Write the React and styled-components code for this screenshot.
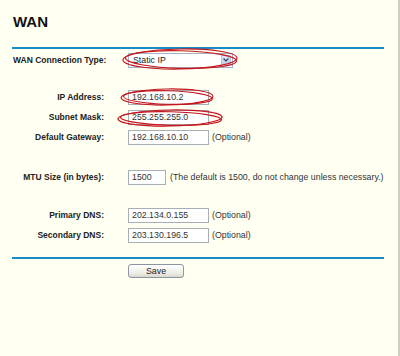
import React from "react";
import styled, { createGlobalStyle } from "styled-components";

const GlobalStyle = createGlobalStyle`
  html, body {
    margin: 0;
    padding: 0;
    background: #fffff2;
  }
  * {
    box-sizing: border-box;
  }
`;

const Page = styled.div`
  position: relative;
  width: 400px;
  height: 356px;
  background: #fffff2;
  border-right: 2px solid #cfcfc2;
  padding: 13px 0 0 12px;
  font-family: "Liberation Sans", Arial, sans-serif;
  font-size: 8.8px;
  color: #1e1e1e;
  overflow: hidden;
`;

const Title = styled.h1`
  margin: 0 0 16px 1px;
  font-size: 15px;
  line-height: 18px;
  font-weight: bold;
  color: #111;
`;

const Rule = styled.div`
  width: 372px;
  height: 2px;
  background: #1b8ac9;
`;

const Form = styled.div`
  display: flex;
  flex-direction: column;
  padding-top: 1px;
  padding-bottom: 12px;
`;

const Row = styled.div`
  display: flex;
  align-items: center;
  height: 20px;
  margin-top: ${(props) => props.space || 0}px;
`;

const Label = styled.div`
  width: 92px;
  margin-right: 24px;
  font-size: 8.5px;
  font-weight: bold;
  text-align: ${(props) => (props.left ? "left" : "right")};
  padding-left: ${(props) => (props.left ? "1px" : "0")};
  white-space: nowrap;
  color: #222;
`;

const Input = styled.input`
  width: ${(props) => props.w || 81}px;
  height: 15px;
  border: 1px solid #a7aeb5;
  background: #fff;
  padding: 0 3px;
  margin: 0;
  font-family: "Liberation Sans", Arial, sans-serif;
  font-size: 8.8px;
  color: #333;
  outline: none;
`;

const Note = styled.span`
  margin-left: ${(props) => props.gap || 3}px;
  white-space: nowrap;
  color: #333;
`;

const Select = styled.div`
  width: 105px;
  height: 15px;
  border: 1px solid #a5b3c8;
  background: #fff;
  display: flex;
  align-items: center;
  justify-content: space-between;
  padding: 0 1px 0 4px;
  color: #222;
`;

const Arrow = styled.span`
  width: 10px;
  height: 11px;
  background: linear-gradient(#dfe8f6, #bccde8);
  border: 1px solid #b6c5dc;
  border-radius: 1px;
  display: flex;
  align-items: center;
  justify-content: center;
`;

const Footer = styled.div`
  padding-left: 116px;
  padding-top: 5px;
`;

const Button = styled.button`
  width: 56px;
  height: 14px;
  margin: 0;
  padding: 0;
  border: 1px solid #8c96a2;
  border-radius: 3px;
  background: linear-gradient(#ffffff, #ecece6 70%, #d8d8d0);
  font-family: "Liberation Sans", Arial, sans-serif;
  font-size: 8.8px;
  line-height: 12px;
  color: #222;
`;

const Marks = styled.svg`
  position: absolute;
  top: 0;
  left: 0;
  pointer-events: none;
`;

const marks = [
  { cx: 180, cy: 59, rx: 57, ry: 10 },
  { cx: 167, cy: 97, rx: 46, ry: 8 },
  { cx: 170, cy: 118, rx: 52, ry: 8 },
];

const fields = [
  { label: "IP Address:", value: "192.168.10.2" },
  { label: "Subnet Mask:", value: "255.255.255.0" },
  { label: "Default Gateway:", value: "192.168.10.10", note: "(Optional)" },
];

const dns = [
  { label: "Primary DNS:", value: "202.134.0.155" },
  { label: "Secondary DNS:", value: "203.130.196.5" },
];

const App = () => {
  return (
    <>
      <GlobalStyle />
      <Page>
        <Title>WAN</Title>
        <Rule />
        <Form>
          <Row>
            <Label left>WAN Connection Type:</Label>
            <Select>
              Static IP
              <Arrow>
                <svg width="6" height="4" viewBox="0 0 6 4">
                  <path d="M0.5 0.5 L3 3 L5.5 0.5" fill="none" stroke="#2c3e66" strokeWidth="1.2" />
                </svg>
              </Arrow>
            </Select>
          </Row>

          {fields.map((f, i) => (
            <Row key={f.label} space={i === 0 ? 17 : 0}>
              <Label>{f.label}</Label>
              <Input defaultValue={f.value} readOnly />
              {f.note && <Note>{f.note}</Note>}
            </Row>
          ))}

          <Row space={20}>
            <Label>MTU Size (in bytes):</Label>
            <Input w={38} defaultValue="1500" readOnly />
            <Note gap={4}>(The default is 1500, do not change unless necessary.)</Note>
          </Row>

          {dns.map((f, i) => (
            <Row key={f.label} space={i === 0 ? 18 : 0}>
              <Label>{f.label}</Label>
              <Input defaultValue={f.value} readOnly />
              <Note>(Optional)</Note>
            </Row>
          ))}
        </Form>
        <Rule />
        <Footer>
          <Button>Save</Button>
        </Footer>

        {/* hand-drawn red circles over the screenshot */}
        <Marks width="400" height="356">
          {marks.map((m, i) => (
            <g key={i} fill="none" stroke="#c4161c" strokeWidth="1.2">
              <ellipse cx={m.cx} cy={m.cy} rx={m.rx} ry={m.ry} transform={`rotate(-1 ${m.cx} ${m.cy})`} />
              <ellipse cx={m.cx + 1} cy={m.cy + 0.5} rx={m.rx - 1.5} ry={m.ry - 1.2} transform={`rotate(1.5 ${m.cx} ${m.cy})`} />
            </g>
          ))}
        </Marks>
      </Page>
    </>
  );
};

export default App;
